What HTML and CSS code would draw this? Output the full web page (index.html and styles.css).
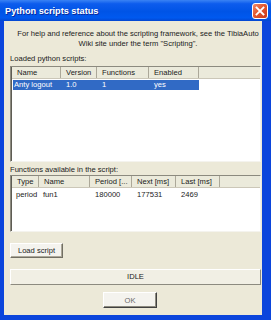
FILE: index.html
```html
<!DOCTYPE html>
<html lang="en">
<head>
  <meta charset="UTF-8">
  <meta name="viewport" content="width=device-width, initial-scale=1.0">
  <title>Python scripts status</title>
  <link rel="stylesheet" href="styles.css">
</head>
<body>
  <div class="window">
    <div class="titlebar">
      <span class="title">Python scripts status</span>
      <span class="close">
        <svg width="10" height="10" viewBox="0 0 10 10">
          <path d="M1.5 1.5 L8.5 8.5 M8.5 1.5 L1.5 8.5" stroke="#fff" stroke-width="1.8" stroke-linecap="square"/>
        </svg>
      </span>
    </div>
    <div class="client">
      <p class="help">For help and reference about the scripting framework, see the TibiaAuto<br>Wiki site under the term "Scripting".</p>

      <div class="label">Loaded python scripts:</div>
      <div class="list scripts">
        <div class="hdr">
          <div>Name</div>
          <div>Version</div>
          <div>Functions</div>
          <div>Enabled</div>
          <div class="rest"></div>
        </div>
        <div class="row selected">
          <div>Anty logout</div>
          <div>1.0</div>
          <div>1</div>
          <div>yes</div>
        </div>
      </div>

      <div class="label second">Functions available in the script:</div>
      <div class="list funcs">
        <div class="hdr">
          <div>Type</div>
          <div>Name</div>
          <div>Period [...</div>
          <div>Next [ms]</div>
          <div>Last [ms]</div>
          <div class="rest"></div>
        </div>
        <div class="row">
          <div>period</div>
          <div>fun1</div>
          <div>180000</div>
          <div>177531</div>
          <div>2469</div>
        </div>
      </div>

      <button class="btn load">Load script</button>
      <div class="status">IDLE</div>
      <div class="footer">
        <button class="btn ok">OK</button>
      </div>
    </div>
  </div>
</body>
</html>
```

FILE: styles.css
```css
body{
  margin: 0;
  font-family: "Liberation Sans", Arial, sans-serif;
  font-size: 7.6px;
  color: #1a1a1a;
}
.window{
  width: 271px;
  height: 320px;
  box-sizing: border-box;
  background-color: #0b45dc;
  display: flex;
  flex-direction: column;
}
.titlebar{
  height: 21px;
  flex: none;
  display: flex;
  align-items: center;
  justify-content: space-between;
  padding: 0 3px 0 5px;
  background: linear-gradient(#3a83f4 0%, #0d5ced 18%, #0054e6 55%, #0059ef 85%, #0346d0 100%);
}
.title{
  color: white;
  font-weight: bold;
  font-size: 9.2px;
  text-shadow: 1px 1px #0a2a9c;
}
.close{
  width: 14px;
  height: 14px;
  border: 1px solid white;
  border-radius: 3px;
  background: linear-gradient(135deg, #f08a6a 0%, #e2582f 45%, #c8391a 100%);
  display: flex;
  align-items: center;
  justify-content: center;
}
.client{
  flex: 1;
  margin: 0 9px 5px 4px;
  background-color: #ece9d8;
  padding: 8px 0 0 6px;
  display: flex;
  flex-direction: column;
  align-items: flex-start;
}
.help{
  margin: 0 -4px 0 0;
  align-self: stretch;
  text-align: center;
  line-height: 10px;
}
.label{
  margin-top: 5px;
  line-height: 10px;
}
.label.second{
  margin-top: 3px;
}
.list{
  width: 251px;
  box-sizing: border-box;
  background-color: white;
  border: 1px solid #7f9db9;
  border-color: #8c8a7f #f4f3ee #f4f3ee #8c8a7f;
  box-shadow: inset 1px 1px #5e5c54;
  margin-top: 2px;
}
.list.scripts{
  height: 96px;
}
.list.funcs{
  height: 57px;
  margin-top: 0;
}
.hdr{
  display: grid;
  height: 11px;
  background-color: #ebeadb;
  border-bottom: 1px solid #cbc7b8;
  margin-left: 1px;
}
.hdr div{
  border-right: 1px solid #aca899;
  line-height: 11px;
  padding-left: 5px;
  white-space: nowrap;
  overflow: hidden;
}
.hdr .rest{
  border-right: none;
}
.scripts .hdr{
  grid-template-columns: 49px 36px 52px 50px 1fr;
}
.funcs .hdr{
  grid-template-columns: 27px 51px 42px 44px 44px 1fr;
}
.row{
  display: grid;
  height: 10px;
  line-height: 10px;
  margin-top: 1px;
}
.row div{
  padding-left: 5px;
  white-space: nowrap;
}
.row.selected{
  grid-template-columns: 48px 36px 52px 50px;
  width: 186px;
  margin-left: 2px;
  background-color: #316ac5;
  color: white;
}
.row.selected div:first-child{
  padding-left: 1px;
}
.funcs .row{
  grid-template-columns: 27px 51px 42px 44px 44px;
  margin-left: 1px;
  margin-top: 2px;
}
.funcs .row div{
  padding-left: 4px;
}
.funcs .row div:nth-child(n+3){
  padding-left: 5px;
}
.btn{
  font-family: "Liberation Sans", Arial, sans-serif;
  font-size: 7.6px;
  color: #1a1a1a;
  background-color: #f4f3ee;
  border: 1px solid;
  border-color: white #716f64 #716f64 white;
  box-shadow: inset -1px -1px #aca899;
  padding: 0;
  margin: 0;
}
.btn.load{
  width: 53px;
  height: 15px;
  margin-top: 11px;
}
.status{
  width: 251px;
  height: 16px;
  box-sizing: border-box;
  margin-top: 11px;
  background-color: #f1efe4;
  border: 1px solid;
  border-color: white #8c8a7f #8c8a7f white;
  text-align: center;
  line-height: 14px;
}
.footer{
  margin-top: 7px;
  padding-left: 93px;
}
.btn.ok{
  width: 54px;
  height: 16px;
  color: #6b6b6b;
  border-color: white #404040 #404040 white;
  box-shadow: inset -1px -1px #8c8a7f;
}
```
